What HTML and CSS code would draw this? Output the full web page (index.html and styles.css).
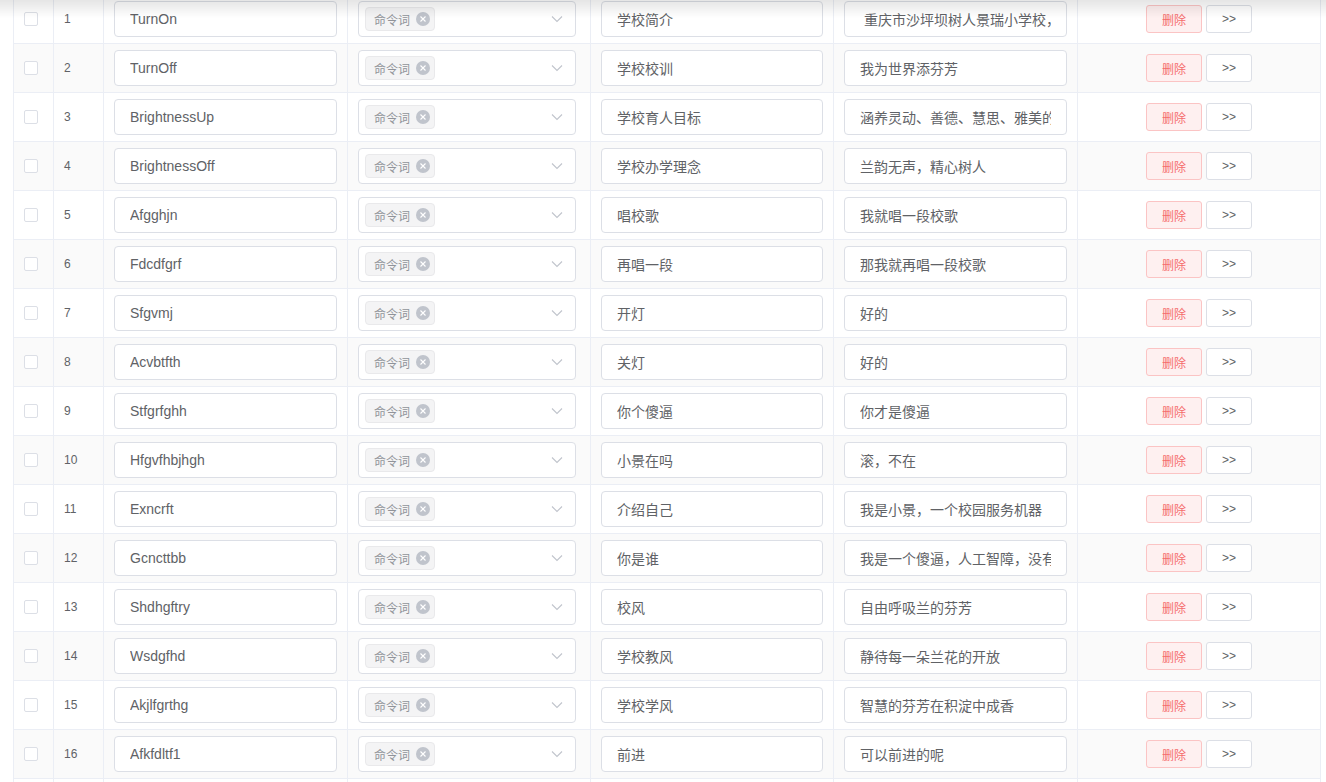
FILE: index.html
```html
<!DOCTYPE html>
<html lang="zh-CN">

<head>
    <meta charset="UTF-8">
    <meta name="viewport" content="width=device-width, initial-scale=1.0">
    <title>Commands</title>
    <link rel="stylesheet" href="styles.css">
</head>

<body>
    <div class="top-shadow"></div>
    <div class="container">
        <table class="cmd-table">
            <colgroup>
                <col class="col-check">
                <col class="col-index">
                <col class="col-wide">
                <col class="col-mid">
                <col class="col-mid">
                <col class="col-wide">
                <col class="col-ops">
            </colgroup>
            <tbody id="cmdBody"></tbody>
        </table>
    </div>

    <script>
        const commands = [
            { name: "TurnOn", ask: "学校简介", answer: " 重庆市沙坪坝树人景瑞小学校，创办于2003年" },
            { name: "TurnOff", ask: "学校校训", answer: "我为世界添芬芳" },
            { name: "BrightnessUp", ask: "学校育人目标", answer: "涵养灵动、善德、慧思、雅美的景瑞少年" },
            { name: "BrightnessOff", ask: "学校办学理念", answer: "兰韵无声，精心树人" },
            { name: "Afgghjn", ask: "唱校歌", answer: "我就唱一段校歌" },
            { name: "Fdcdfgrf", ask: "再唱一段", answer: "那我就再唱一段校歌" },
            { name: "Sfgvmj", ask: "开灯", answer: "好的" },
            { name: "Acvbtfth", ask: "关灯", answer: "好的" },
            { name: "Stfgrfghh", ask: "你个傻逼", answer: "你才是傻逼" },
            { name: "Hfgvfhbjhgh", ask: "小景在吗", answer: "滚，不在" },
            { name: "Exncrft", ask: "介绍自己", answer: "我是小景，一个校园服务机器" },
            { name: "Gcncttbb", ask: "你是谁", answer: "我是一个傻逼，人工智障，没有感情" },
            { name: "Shdhgftry", ask: "校风", answer: "自由呼吸兰的芬芳" },
            { name: "Wsdgfhd", ask: "学校教风", answer: "静待每一朵兰花的开放" },
            { name: "Akjlfgrthg", ask: "学校学风", answer: "智慧的芬芳在积淀中成香" },
            { name: "Afkfdltf1", ask: "前进", answer: "可以前进的呢" },
            { name: "Backward", ask: "后退", answer: "好的" }
        ];

        const body = document.getElementById('cmdBody');

        commands.forEach((cmd, i) => {
            const tr = document.createElement('tr');
            tr.innerHTML = `
                <td><span class="checkbox"></span></td>
                <td class="index">${i + 1}</td>
                <td><input class="text-input" type="text"></td>
                <td class="select-cell">
                    <div class="select">
                        <span class="tag">命令词<span class="tag-close">
                            <svg viewBox="0 0 14 14" width="14" height="14"><path d="M4.5 4.5 L9.5 9.5 M9.5 4.5 L4.5 9.5" stroke="#fff" stroke-width="1.1" fill="none"/></svg>
                        </span></span>
                        <svg class="arrow" viewBox="0 0 12 8" width="12" height="8"><path d="M1 1.5 L6 6.5 L11 1.5" stroke="#c0c4cc" stroke-width="1.1" fill="none"/></svg>
                    </div>
                </td>
                <td><input class="text-input" type="text"></td>
                <td><input class="text-input" type="text"></td>
                <td class="ops">
                    <div class="ops-inner">
                        <button class="btn btn-danger">删除</button>
                        <button class="btn">&gt;&gt;</button>
                    </div>
                </td>`;
            const inputs = tr.querySelectorAll('input');
            inputs[0].value = cmd.name;
            inputs[1].value = cmd.ask;
            inputs[2].value = cmd.answer;
            body.appendChild(tr);
        });
    </script>
</body>

</html>
```

FILE: styles.css
```css
* {
    margin: 0;
    padding: 0;
    box-sizing: border-box;
}

body {
    background-color: #fff;
    font-family: "Liberation Sans", "Noto Sans CJK SC", sans-serif;
    font-size: 14px;
    color: #606266;
    overflow: hidden;
}

.top-shadow {
    position: fixed;
    top: 0;
    left: 0;
    right: 0;
    height: 18px;
    background: linear-gradient(to bottom, rgba(0, 0, 0, 0.1), rgba(0, 0, 0, 0));
    pointer-events: none;
    z-index: 10;
}

.container {
    padding-left: 13px;
    margin-top: -5px;
}

.cmd-table {
    width: 1307px;
    table-layout: fixed;
    border-collapse: separate;
    border-spacing: 0;
    border-left: 1px solid #ebeef5;
}

.col-check { width: 40px; }
.col-index { width: 50px; }
.col-wide { width: 244px; }
.col-mid { width: 243px; }
.col-ops { width: 243px; }

.cmd-table td {
    height: 49px;
    padding: 6px 10px;
    border-right: 1px solid #ebeef5;
    border-bottom: 1px solid #ebeef5;
    vertical-align: middle;
}

.cmd-table tr:nth-child(even) td {
    background-color: #fafafa;
}

.checkbox {
    display: block;
    width: 14px;
    height: 14px;
    border: 1px solid #dcdfe6;
    border-radius: 2px;
    background-color: #fff;
}

.index {
    font-size: 12px;
    color: #606266;
}

.text-input {
    display: block;
    width: 100%;
    height: 36px;
    padding: 0 15px;
    border: 1px solid #dcdfe6;
    border-radius: 4px;
    background-color: #fff;
    font-family: inherit;
    font-size: 14px;
    color: #606266;
    outline: none;
}

.cmd-table td.select-cell {
    padding-right: 14px;
}

.select {
    display: flex;
    align-items: center;
    height: 36px;
    padding: 0 12px 0 6px;
    border: 1px solid #dcdfe6;
    border-radius: 4px;
    background-color: #fff;
}

.tag {
    display: flex;
    align-items: center;
    height: 24px;
    padding: 0 4px 0 8px;
    border: 1px solid #e9e9eb;
    border-radius: 4px;
    background-color: #f4f4f5;
    color: #909399;
    font-size: 12px;
}

.tag-close {
    display: flex;
    width: 14px;
    height: 14px;
    margin-left: 6px;
    border-radius: 50%;
    background-color: #c0c4cc;
}

.arrow {
    margin-left: auto;
}

.ops-inner {
    display: flex;
    justify-content: center;
    gap: 4px;
}

.btn {
    height: 28px;
    padding: 0 15px;
    border: 1px solid #dcdfe6;
    border-radius: 3px;
    background-color: #fff;
    color: #606266;
    font-family: inherit;
    font-size: 12px;
    cursor: pointer;
}

.btn-danger {
    background-color: #fef0f0;
    border-color: #fbc4c4;
    color: #f56c6c;
}
```
